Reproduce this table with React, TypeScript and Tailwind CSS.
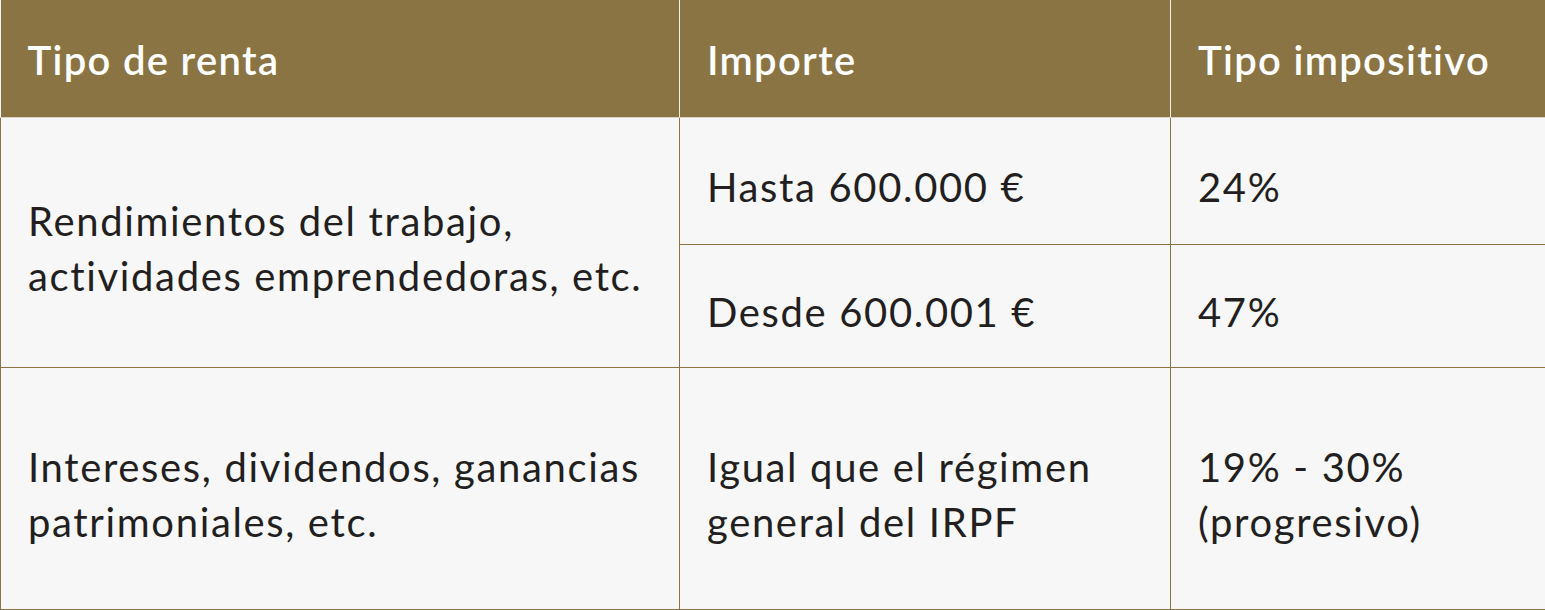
export default function App() {
  const cell = 'border border-[#8b7443] pl-[27px] pt-[14px] align-middle tracking-[1.65px]';
  return (
    <div className="h-[610px] w-[1545px] bg-white font-['Lato',sans-serif] text-[#231f20]">
      <table className="w-[1545px] table-fixed border-collapse bg-[#f7f7f7] text-[40px] leading-[55px]">
        <colgroup>
          <col className="w-[679px]" />
          <col className="w-[491px]" />
          <col className="w-[375px]" />
        </colgroup>
        <thead>
          <tr className="h-[117px] bg-[#8b7443] text-left text-white tracking-[1.3px]">
            <th className="border-r border-r-[#f2efe8] border-b border-b-[#d9d2c2] pl-[27px] pt-[4px] font-semibold">Tipo de renta</th>
            <th className="border-r border-r-[#f2efe8] border-b border-b-[#d9d2c2] pl-[27px] pt-[4px] font-semibold">Importe</th>
            <th className="border-b border-b-[#d9d2c2] pl-[27px] pt-[4px] font-semibold">Tipo impositivo</th>
          </tr>
        </thead>
        <tbody>
          <tr className="h-[127px]">
            <td rowSpan={2} className={cell}>
              Rendimientos del trabajo,
              <br />
              actividades emprendedoras, etc.
            </td>
            <td className={cell}>Hasta 600.000 €</td>
            <td className={cell}>24%</td>
          </tr>
          <tr className="h-[123px]">
            <td className={cell}>Desde 600.001 €</td>
            <td className={cell}>47%</td>
          </tr>
          <tr className="h-[242px]">
            <td className={cell}>
              Intereses, dividendos, ganancias
              <br />
              patrimoniales, etc.
            </td>
            <td className={cell}>
              Igual que el régimen
              <br />
              general del IRPF
            </td>
            <td className={cell}>
              19% - 30%
              <br />
              (progresivo)
            </td>
          </tr>
        </tbody>
      </table>
    </div>
  );
}
